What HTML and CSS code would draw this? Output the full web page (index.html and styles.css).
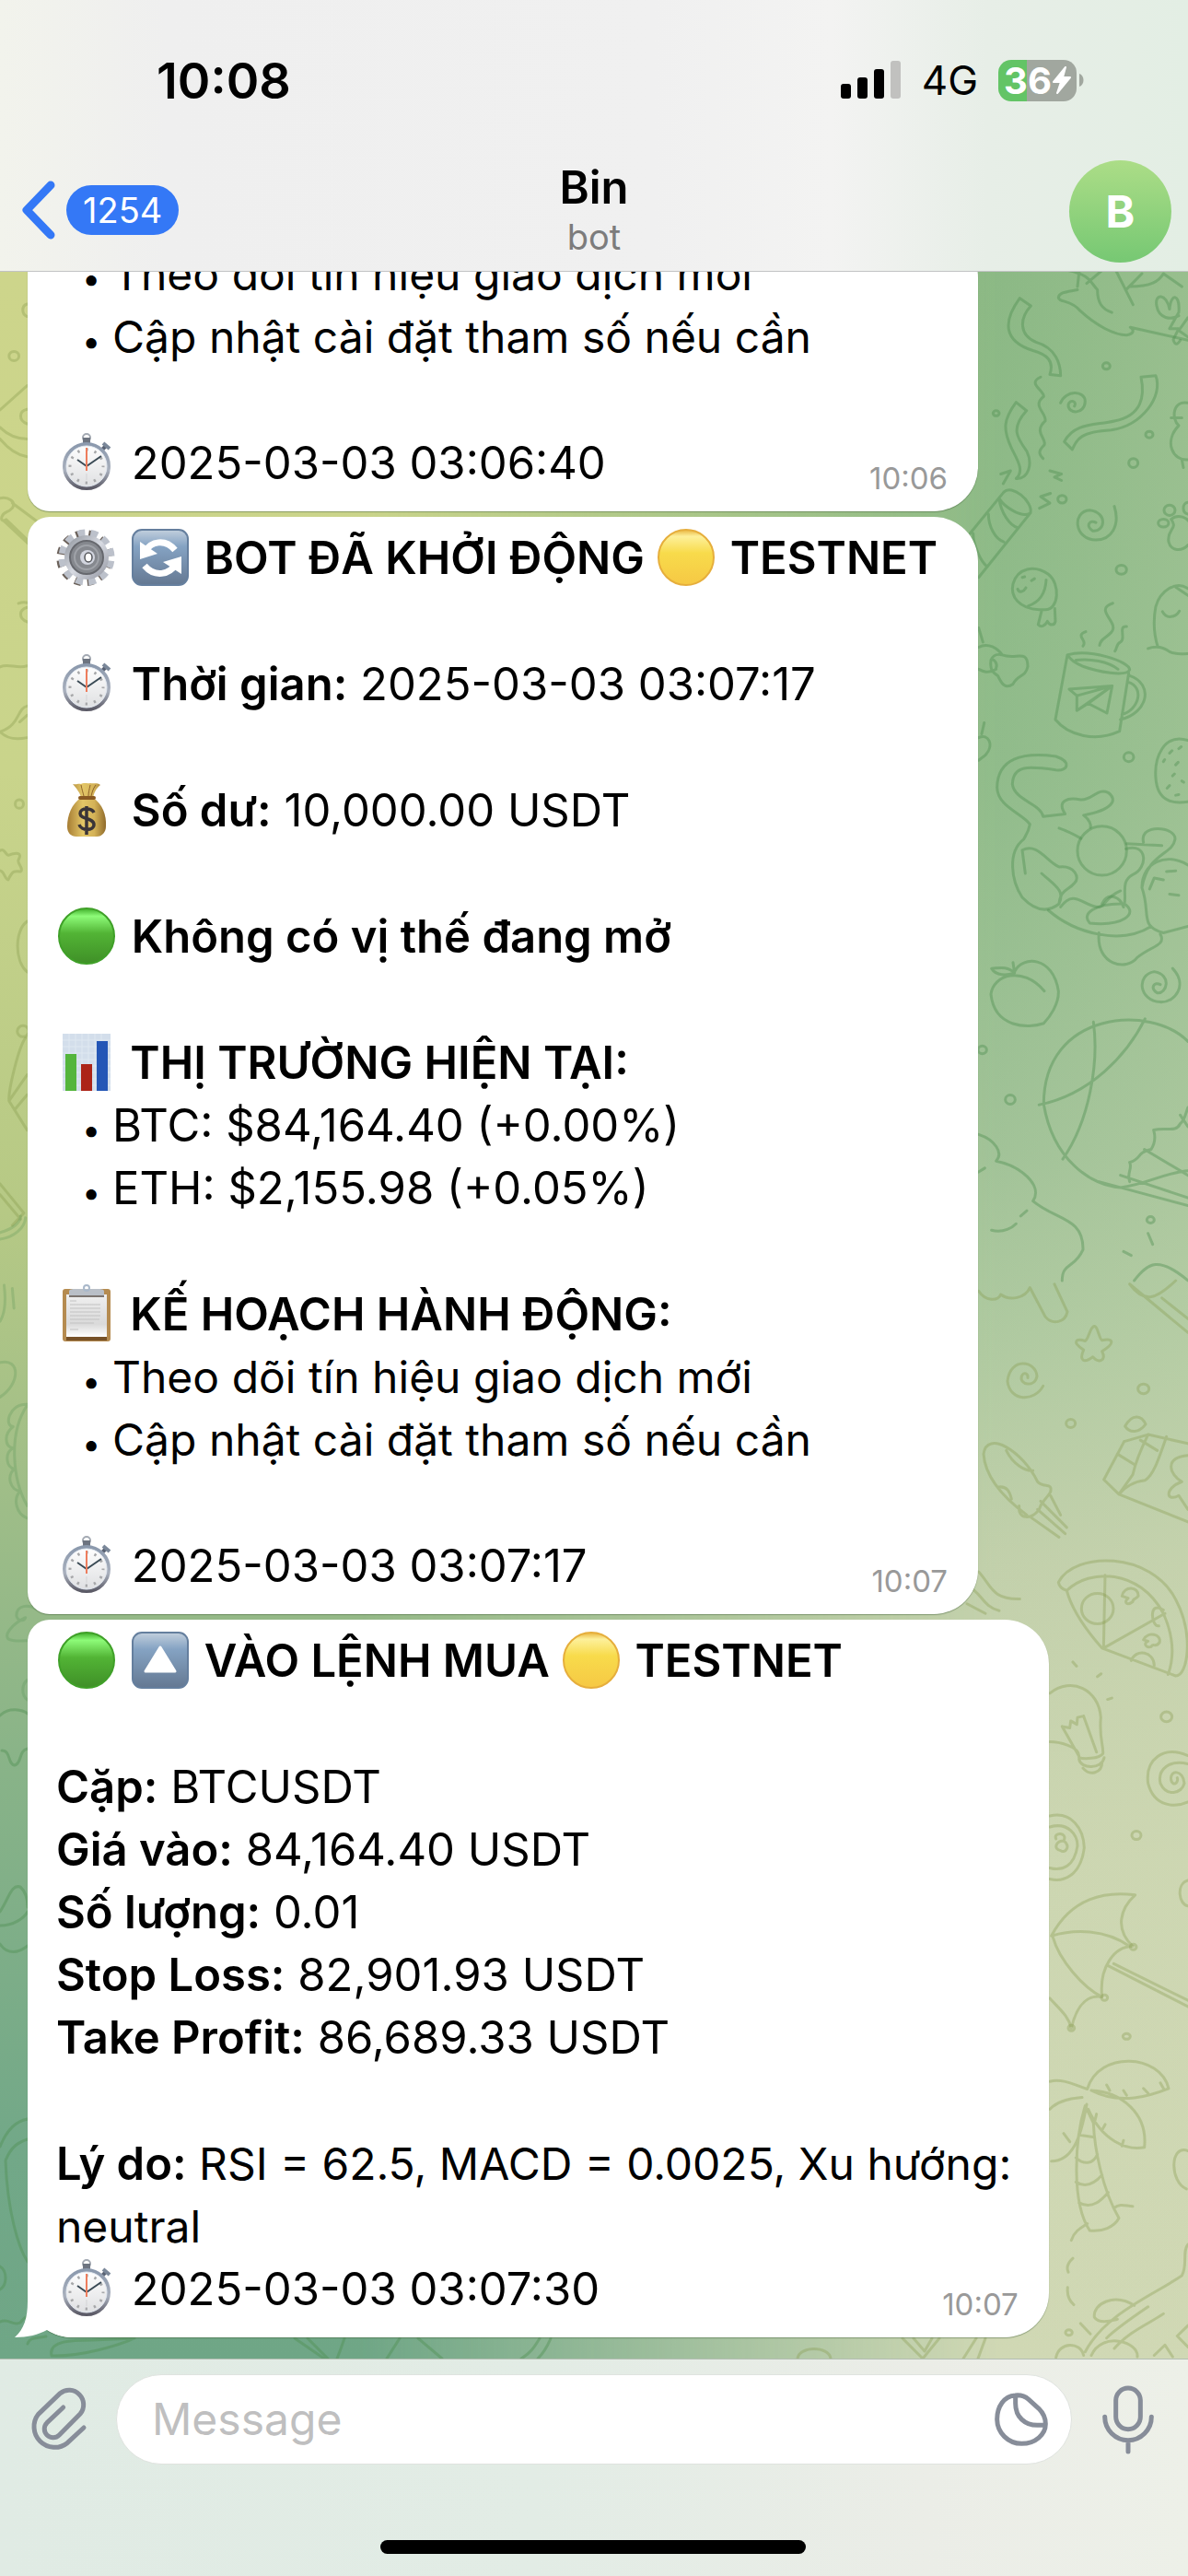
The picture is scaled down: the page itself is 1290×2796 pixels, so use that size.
FILE: index.html
```html
<!DOCTYPE html>
<html lang="vi">
<head>
<meta charset="utf-8">
<meta name="viewport" content="width=device-width, initial-scale=1">
<title>Bin</title>
<link rel="stylesheet" href="styles.css">
</head>
<body>
<svg class="sprite" aria-hidden="true">
  <defs>
    <linearGradient id="g-green" x1="0" y1="0" x2="0" y2="1"><stop offset="0" stop-color="#3fae2a"/><stop offset=".14" stop-color="#8dfb78"/><stop offset=".45" stop-color="#52b435"/><stop offset="1" stop-color="#3f8f27"/></linearGradient>
    <linearGradient id="g-yellow" x1="0" y1="0" x2="0" y2="1"><stop offset="0" stop-color="#e9b53f"/><stop offset=".12" stop-color="#fdf09a"/><stop offset=".42" stop-color="#f8db4b"/><stop offset="1" stop-color="#f6c844"/></linearGradient>
    <linearGradient id="g-key" x1="0" y1="0" x2="0" y2="1"><stop offset="0" stop-color="#c2cfdd"/><stop offset=".3" stop-color="#85a3c3"/><stop offset="1" stop-color="#647892"/></linearGradient>
    <linearGradient id="g-steel" x1="0" y1="0" x2="1" y2="1"><stop offset="0" stop-color="#8b9098"/><stop offset=".5" stop-color="#d7dae2"/><stop offset="1" stop-color="#8f939e"/></linearGradient>
    <linearGradient id="g-rim" x1="0" y1="0" x2="0" y2="1"><stop offset="0" stop-color="#8b99ad"/><stop offset=".6" stop-color="#a9b0bd"/><stop offset="1" stop-color="#5b5a66"/></linearGradient>
    <linearGradient id="g-face" x1="0" y1="0" x2="0" y2="1"><stop offset="0" stop-color="#fff"/><stop offset="1" stop-color="#dedfe1"/></linearGradient>
    <linearGradient id="g-bag" x1="0" y1="0" x2="1" y2="0"><stop offset="0" stop-color="#a67c33"/><stop offset=".4" stop-color="#e3c667"/><stop offset=".7" stop-color="#d4b257"/><stop offset="1" stop-color="#8f6a2b"/></linearGradient>
    <linearGradient id="g-paper" x1="0" y1="0" x2="0" y2="1"><stop offset="0" stop-color="#efefef"/><stop offset=".7" stop-color="#dadada"/><stop offset="1" stop-color="#fff"/></linearGradient>
  </defs>
  <symbol id="e-green" viewBox="0 0 64 64"><circle cx="33" cy="32" r="30" fill="url(#g-green)" stroke="#3fa028" stroke-width="2"/></symbol>
  <symbol id="e-yellow" viewBox="0 0 64 64"><circle cx="33" cy="32" r="30" fill="url(#g-yellow)" stroke="#e6ae3c" stroke-width="2"/></symbol>
  <symbol id="e-up" viewBox="0 0 64 64"><rect x="3" y="2" width="60" height="60" rx="10" fill="url(#g-key)" stroke="#657f9e" stroke-width="2"/><path d="M33 18 49 44H17Z" fill="#fff" stroke="#fff" stroke-width="3" stroke-linejoin="round"/></symbol>
  <symbol id="e-refresh" viewBox="0 0 64 64"><rect x="3" y="2" width="60" height="60" rx="10" fill="url(#g-key)" stroke="#657f9e" stroke-width="2"/>
    <path d="M17 25C23 15 38 11 49 24" fill="none" stroke="#fff" stroke-width="7"/><path d="M11 15V34L30 28Z" fill="#fff"/>
    <path d="M50 39C43 51 27 54 16 41" fill="none" stroke="#fff" stroke-width="7"/><path d="M56 50V31L36 37Z" fill="#fff"/></symbol>
  <symbol id="e-gear" viewBox="0 0 64 64"><g transform="rotate(8 33 32)"><circle cx="31" cy="33" r="26" fill="none" stroke="#6b615a" stroke-width="9" stroke-dasharray="6.800 6.800"/><circle cx="33" cy="32" r="26" fill="none" stroke="#bcc1cb" stroke-width="9" stroke-dasharray="7.600 6"/></g>
    <circle cx="33" cy="32" r="24" fill="url(#g-steel)"/><circle cx="33" cy="32" r="18" fill="#85888e" stroke="#66686e" stroke-width="2"/><circle cx="33" cy="32" r="13" fill="none" stroke="#9fa2a8" stroke-width="2"/><circle cx="34" cy="32" r="8" fill="#d2d5df"/><ellipse cx="35" cy="32" rx="4" ry="5" fill="#fff" stroke="#55575c" stroke-width="1.500"/></symbol>
  <symbol id="e-watch" viewBox="0 0 64 64"><circle cx="33" cy="5" r="4" fill="none" stroke="#a4aab3" stroke-width="2"/><path d="M29 5h8v6h-8z" fill="#6d7480"/><path d="m50 18 5-5" stroke="#596273" stroke-width="4"/><path d="m51 11 7 6" stroke="#7a8799" stroke-width="4"/>
    <circle cx="33" cy="36" r="24" fill="url(#g-face)" stroke="url(#g-rim)" stroke-width="4"/><circle cx="33" cy="36" r="22" fill="none" stroke="#e4eaf2"/>
    <circle cx="33" cy="36" r="18" fill="none" stroke="#a7a8aa" stroke-width="3" stroke-dasharray="2.400 7.020" stroke-dashoffset="1.200"/>
    <path d="M33 36 23 29M33 36 49 25" stroke="#3a4a55" stroke-width="2"/><path d="M33 16V41" stroke="#ee7d5d" stroke-width="2"/><path d="M33 44v7" stroke="#d3d3d5"/></symbol>
  <symbol id="e-bag" viewBox="0 0 64 64"><path d="M18 4C22 5 24 3 27 4 30 2 34 4 37 3 41 4 44 2 48 5 43 9 41 14 40 19 50 25 55 38 54 50 54 56 50 61 44 61H22C16 61 12 57 12 50 12 38 17 25 27 19 26 13 22 9 18 4Z" fill="url(#g-bag)"/><path d="M26 19h15" stroke="#8a5a22" stroke-width="4" stroke-linecap="round"/><path d="M27 5c1 5 2 8 3 12M37 5c-1 5-2 8-2 12M43 5c-3 4-4 8-5 12" stroke="#8f632a" fill="none"/><path d="M41 35C39 30 26 29 26 36 26 43 41 40 41 48 41 55 27 55 25 48M33 28V59" fill="none" stroke="#3a3438" stroke-width="3.500"/></symbol>
  <symbol id="e-chart" viewBox="0 0 64 64"><path d="M7 1h52v62H7z" fill="#d3deeb"/><path d="M7 8h52M7 15h52M7 22h52M7 29h52M7 36h52M7 43h52M7 50h52M7 57h52M14 1v62M21 1v62M28 1v62M35 1v62M42 1v62M49 1v62" stroke="#dfe8f1"/><path d="M10 23h12v40H10z" fill="#54b53c"/><path d="M27 34h12v29H27z" fill="#ac2418"/><path d="M44 9h12v54H44z" fill="#2456b6"/></symbol>
  <symbol id="e-board" viewBox="0 0 64 64"><rect x="7" y="5" width="52" height="57" rx="3" fill="#b58b50"/><path d="M11 56h44v5H11z" fill="#765128"/><path d="M11 11h44v46H11z" fill="url(#g-paper)"/><path d="M15 18h7M15 22h33M15 26h33M15 30h33M15 34h33M15 38h32M15 42h26M15 49h9" stroke="#c2c2c2"/><path d="M14 8c0-3 3-3 8-3h22c5 0 8 0 8 3v6H14z" fill="#b9bfc7"/><path d="M14 12h38v2H14z" fill="#7b7470"/><circle cx="33" cy="4" r="3" fill="none" stroke="#a9b8ca" stroke-width="2"/></symbol>
</svg>

<div class="app">
  <header class="top">
    <div class="status">
      <time class="clock">10:08</time>
      <div class="indicators">
        <svg width="66" height="42" viewBox="0 0 66 42" role="img" aria-label="Signal"><rect y="25" width="11" height="16" rx="3"/><rect x="18" y="18" width="11" height="23" rx="3"/><rect x="36" y="9" width="11" height="32" rx="3"/><rect x="54" width="11" height="41" rx="3" fill="#c1c1bf"/></svg>
        <span class="network">4G</span>
        <span class="battery"><span class="level">36<svg width="20" height="30" viewBox="0 0 20 30" aria-hidden="true"><path d="M14 1 1 17H9L5 29 19 12H11Z" fill="#fff" stroke="#fff" stroke-width="2" stroke-linejoin="round"/></svg></span><svg width="6" height="14" viewBox="0 0 6 14" aria-hidden="true"><path d="M0 0C6 2 6 12 0 14Z" fill="#a1a79f"/></svg></span>
      </div>
    </div>
    <nav class="nav">
      <a class="back" href="#chats" aria-label="Back, 1254 unread">
        <svg width="42" height="66" viewBox="0 0 42 66" aria-hidden="true"><path d="M37 6 11 33 37 60" fill="none" stroke="#3478f6" stroke-width="9" stroke-linecap="round" stroke-linejoin="round"/></svg>
        <span class="count">1254</span>
      </a>
      <div class="peer"><h1>Bin</h1><p>bot</p></div>
      <a class="avatar" href="#profile">B</a>
    </nav>
  </header>

  <main class="chat">
    <svg class="doodles" viewBox="0 295 1290 2265" preserveAspectRatio="xMaxYMin slice" aria-hidden="true">
      <g class="ink" transform="translate(1050 290) scale(.3333 .7015)">
        <path d="M330 5C400 12 400 22 425 35 425 55 440 65 472 70M360 30 366 5M390 25 440 5M485 5 541 58M520 34 570 10M530 30C600 30 625 22 640 10L700 30M360 35C330 38 300 38 298 47 300 55 340 50 370 68 420 90 480 105 520 105 545 103 545 97 532 93L720 113"/>
        <path d="M660 65C650 40 610 40 618 60 625 80 665 82 690 75M660 65C665 38 695 42 690 70M690 70 660 95H690L672 112Q680 125 695 113M720 78 690 98 720 108"/>
        <path d="M172 48 208 60C170 80 170 105 225 116 290 125 305 150 305 168L270 166C285 145 260 135 215 129 120 115 115 85 172 48ZM160 209 194 222C140 250 165 265 195 285 215 305 200 328 160 327 190 315 160 295 145 280 115 250 120 235 160 209Z"/>
        <path d="M240 170C195 180 250 190 250 200 210 215 260 225 255 238 215 255 260 265 252 275 230 285 235 290 248 296"/>
        <path d="M305 210C320 190 385 190 385 208 383 228 330 228 330 213 335 203 360 208 350 215M480 370C500 400 470 422 420 422 350 422 340 378 400 376 460 380 450 410 410 408 385 400 400 390 420 395"/>
        <path d="M567 170 615 168C640 200 570 245 470 252 370 255 360 265 343 282L317 270C350 240 420 245 480 238 570 230 580 200 567 170Z"/>
        <path d="M110 320 142 315 118 335M270 315 308 320 285 325 308 330M272 350 240 355 270 365 236 373"/>
        <path d="M10 412 120 348C145 335 215 362 207 380 180 390 120 370 105 358M207 380 38 480M70 382C70 400 90 420 120 425M105 358C110 380 140 400 165 403M20 412C20 430 45 455 65 463"/>
        <path d="M235 530C170 528 140 510 150 490 165 465 220 460 265 475 305 490 300 530 255 530ZM258 484C255 510 225 520 200 524M165 498C170 505 185 502 192 496M180 480 188 479M210 485 220 482M243 532 232 553C240 558 255 555 262 548 270 555 285 555 288 548L286 528"/>
        <path d="M38 558 52 580M38 588C70 580 100 590 115 600 160 608 198 590 198 618 190 635 165 630 150 645 120 655 110 640 100 632 80 627 75 620 78 608 85 600 100 598 115 600M78 608C90 605 100 615 95 620M95 622C70 630 50 625 38 622"/>
        <path d="M327 600C400 590 530 610 530 623 520 635 420 625 380 618 350 612 340 608 327 600L288 700C330 725 420 735 497 718L527 628M355 608C400 605 460 610 492 622M530 632C610 645 590 690 500 700M525 642C580 650 560 685 505 692M333 653 473 648 456 690 395 675 358 686V663ZM358 663 473 648 395 675M473 648 358 686"/>
        <path d="M387 564C350 570 395 578 378 586M475 520C410 530 500 550 470 565 450 575 435 575 432 585M520 556C490 555 520 575 500 580 485 583 490 590 482 594"/>
        <path d="M720 497C680 485 630 500 615 525 605 550 610 570 622 588M590 590C620 585 640 588 660 595 680 600 700 598 720 598M637 533C650 545 680 542 692 532M680 495 720 508M720 732C640 720 610 760 615 790 620 830 680 830 720 827M660 752 668 748M690 745 698 742M680 770 688 766M640 765 644 762M670 787 676 784M700 795 706 797M652 806 660 802M680 817 690 816"/>
        <path d="M38 728C70 720 90 740 60 755L38 763M48 722 56 705M720 210C670 205 665 235 690 245 640 270 670 300 720 298M665 233H700M700 298 705 310"/>
        <path d="M665 390C690 380 720 390 720 392M665 390C690 405 650 405 657 425 665 440 700 440 720 430"/><ellipse cx="660" cy="376" rx="18" ry="8"/><ellipse cx="640" cy="396" rx="17" ry="6"/><path d="M720 382C700 380 700 365 720 364"/>
        <path d="M205 862C180 845 100 835 98 805 100 760 180 750 290 757 340 765 330 780 290 778 200 772 150 770 148 800 155 825 240 830 248 850L320 846C290 825 330 820 370 824 410 825 425 805 460 813 495 825 470 840 380 848 400 855 405 863 402 867M205 862C200 875 190 880 185 885 130 905 145 950 180 975 220 995 260 1000 300 985 320 965 290 958 243 938M180 902C230 890 260 920 300 928 350 925 370 945 350 953 330 965 305 962 300 985M180 902 190 938M305 990C350 960 380 990 430 990 450 990 450 975 500 965M300 868C330 873 350 878 372 884"/>
        <ellipse cx="440" cy="903" rx="80" ry="38"/><path d="M520 892 635 895M575 890C560 860 680 865 678 885 670 910 590 905 570 960M518 900C590 890 590 930 540 940 500 950 520 970 513 985 560 1000 510 1020 400 1015 370 1000 420 985 500 985M440 985C460 965 500 975 510 990M430 1030C420 1080 520 1090 555 1068 600 1050 650 1050 630 1032M265 995C350 1030 500 1050 600 1020M720 925C650 905 570 920 570 960 600 1000 560 1020 640 1030L720 1020M595 962 610 945 640 948M650 935 680 934M660 970 690 972"/>
        <path d="M155 1090C180 1065 280 1065 298 1120 300 1140 270 1160 250 1170 200 1178 90 1178 78 1125 85 1095 180 1080 252 1120M155 1092C130 1080 100 1085 80 1085 95 1097 130 1096 155 1092L150 1076M670 1085C720 1110 680 1138 630 1137 560 1135 550 1095 610 1090 670 1095 650 1125 620 1123 595 1115 610 1105 630 1110"/>
        <path d="M720 1198C600 1140 250 1150 250 1295 280 1380 400 1420 500 1424 580 1420 650 1400 720 1398M412 1168C430 1230 400 1320 312 1380M235 1296C400 1280 520 1220 580 1163M430 1415 720 1452M530 1415C520 1400 540 1395 530 1385 570 1380 550 1370 600 1365 620 1350 610 1340 608 1335 650 1330 680 1340 695 1325 710 1320 715 1305 720 1300M578 1365 720 1405M500 1405 720 1440M695 1312 720 1330"/>
        <path d="M38 1342C90 1350 120 1370 95 1383 170 1390 250 1420 215 1445 290 1475 380 1470 378 1520 350 1550 310 1540 310 1568M80 1490C120 1495 150 1485 160 1480M175 1468 195 1460M38 1400 58 1394M590 1495 605 1512M510 1523 535 1529M545 1568C590 1540 625 1530 720 1568"/>
        <ellipse cx="454" cy="153" rx="12" ry="5"/><ellipse cx="95" cy="226" rx="10" ry="4"/><ellipse cx="594" cy="259" rx="12" ry="5"/><ellipse cx="542" cy="303" rx="15" ry="7"/><ellipse cx="310" cy="359" rx="14" ry="6"/><ellipse cx="503" cy="468" rx="17" ry="7"/><ellipse cx="527" cy="758" rx="16" ry="7"/><ellipse cx="141" cy="1288" rx="16" ry="7"/><ellipse cx="50" cy="1211" rx="14" ry="6"/><ellipse cx="598" cy="1474" rx="12" ry="5"/>
      </g>
      <g class="ink olive" transform="translate(1050 1390) scale(.3333 .7526)">
        <path d="M38 15C60 30 100 30 110 20 140 30 190 25 205 10L255 52C280 65 320 60 327 45L285 5M530 5C580 35 620 25 680 0M530 5 720 75M635 25 720 55"/>
        <path d="M410 67C425 60 430 85 440 86 470 83 490 88 440 102 455 115 430 120 410 110 380 120 365 115 380 100 340 88 355 83 385 87 395 85 400 70 410 67Z"/>
        <path d="M248 152C220 175 140 175 132 145 140 110 225 115 228 138 220 155 170 150 178 138 185 130 200 135 198 140"/>
        <path d="M195 338C140 320 60 290 54 250 65 215 180 245 230 290 250 300 280 290 272 305 250 320 240 320 235 330 210 345 165 345 170 325M128 245C150 265 190 275 215 274M100 298C130 295 140 305 145 315M240 318 325 356M230 330 320 365M210 342 300 370M272 310 305 338"/>
        <path d="M512 232 590 222 720 235M512 232 446 287 495 308 720 348M590 222C570 240 550 260 540 280L495 308M650 225C630 250 610 280 580 288 540 290 510 300 495 308M490 250 545 265M565 230 620 245M515 210C540 190 570 195 582 207 560 220 530 220 515 210ZM720 252C640 255 660 280 700 290 640 300 650 320 690 310L720 330"/>
        <path d="M298 435C350 390 600 390 680 460 740 510 720 570 680 570L440 530C400 510 345 480 325 447 310 445 300 440 298 435ZM325 447C400 415 560 415 640 480 680 520 670 550 655 568M450 425 445 530 645 480M535 548C550 530 610 535 610 555M640 475C590 460 600 500 625 498"/><ellipse cx="425" cy="473" rx="52" ry="22"/><path d="M505 455C510 440 560 440 558 455 550 460 540 458 540 463 520 470 510 463 525 458ZM575 518C590 505 635 510 627 522 615 530 605 522 600 528 580 530 575 522 590 520Z"/>
        <path d="M38 420C80 440 80 460 172 459M0 440C50 450 50 470 105 476M0 466 60 480"/>
        <path d="M270 595C340 570 430 590 436 630 430 660 445 670 443 682 430 690 380 690 365 688 370 670 290 665 270 665M365 690C370 705 440 705 447 688M378 703C400 715 440 710 440 695M310 643 365 686M380 628 422 680M310 643 335 645 338 635 358 640 360 630 380 628M345 550 357 556M425 571 437 567M458 604 472 602M720 685C640 670 580 690 590 725 610 760 680 760 720 752M720 697C660 690 620 705 630 725 650 745 700 740 708 725 705 705 660 705 665 720 670 730 690 725 685 717"/>
        <path d="M270 772C340 765 380 790 382 818 370 860 310 868 270 863M270 788C330 780 360 800 360 815 350 845 310 852 270 847M290 805C280 795 330 795 315 808 340 815 320 827 305 822 280 820 290 808 315 808M720 865C680 870 690 900 720 902"/>
        <path d="M275 945C340 890 450 880 548 886 500 905 480 935 540 960 480 960 430 990 440 1033 400 1030 360 1040 340 1078 330 1060 300 1050 270 1035M275 945C350 935 450 935 530 960M280 947C300 980 380 1020 440 1033M460 988 720 1047M478 985 720 1038"/><ellipse cx="542" cy="961" rx="10" ry="4"/><ellipse cx="448" cy="1034" rx="10" ry="4"/><ellipse cx="340" cy="1078" rx="10" ry="4"/>
        <path d="M270 1155C310 1150 350 1160 392 1166 430 1110 630 1115 657 1165 600 1175 500 1190 405 1168M405 1168C500 1170 590 1200 578 1250 520 1255 440 1240 395 1195M375 1178C320 1180 290 1185 270 1195M390 1188C370 1240 340 1270 275 1270M385 1190C350 1240 340 1330 400 1370 440 1372 480 1365 495 1352 440 1310 415 1250 412 1215ZM365 1232 410 1235M355 1265C380 1275 410 1275 425 1260M355 1300C390 1310 420 1300 440 1290M365 1330C410 1340 440 1325 460 1315M340 1384C350 1370 375 1365 392 1360M480 1337C500 1330 520 1335 540 1335M455 1160 465 1168M510 1168 520 1175M575 1165 590 1172M630 1157 640 1165M415 1215 422 1202M440 1225 450 1217M505 1248 510 1240M315 1230 335 1242"/>
        <path d="M345 1410C325 1418 325 1425 330 1430M328 1452C325 1465 335 1472 348 1477M370 1504 402 1519M720 1390C700 1400 720 1420 700 1435 600 1465 450 1490 385 1545M545 1478C480 1460 410 1475 415 1495 430 1505 470 1500 490 1498M590 1480C540 1495 490 1510 455 1525M640 1490C590 1505 530 1515 480 1540M290 1553C300 1530 370 1530 380 1550M405 1550C440 1515 560 1530 555 1552M685 1522 720 1507M685 1522 720 1538M610 1550 645 1535 670 1552M720 1255C660 1245 660 1300 715 1310"/>
        <ellipse cx="575" cy="156" rx="18" ry="7"/><ellipse cx="338" cy="206" rx="15" ry="6"/><ellipse cx="650" cy="629" rx="18" ry="7"/><ellipse cx="552" cy="800" rx="15" ry="6"/><ellipse cx="520" cy="1090" rx="12" ry="4"/><ellipse cx="332" cy="1517" rx="11" ry="4"/>
      </g>
      <g class="ink olive" transform="translate(0 280) scale(.4464 .3571)">
        <path d="M66 140C52 145 52 170 66 178M0 462 66 388M66 460C45 465 45 495 66 504M0 515C20 540 45 550 66 550M0 550C20 580 45 600 66 604M0 730C20 725 40 740 30 760 20 775 10 770 5 785 0 800 10 800 15 795L90 885M30 745 100 810M10 800 70 870M45 1050C55 1045 62 1046 66 1048M66 1062C45 1070 45 1095 66 1106M0 1243C20 1230 40 1250 66 1240M66 1362C40 1370 50 1420 0 1440 15 1460 40 1465 66 1458M48 1410 66 1390"/>
        <ellipse cx="34" cy="298" rx="12" ry="14"/>
      </g>
      <g class="ink olive" transform="translate(0 830) scale(.4464 .3333)">
        <path d="M0 280C10 270 15 295 20 295 40 285 55 285 45 310 40 320 60 340 50 348 35 345 30 345 20 375 12 375 10 345 0 345M66 510C35 540 35 640 66 675M62 890C45 920 20 1060 22 1095L66 1190M22 1095 66 1010M38 1120 66 1075M0 1365 58 1460 30 1500M0 1400 50 1480"/>
        <ellipse cx="47" cy="128" rx="10" ry="14"/><ellipse cx="56" cy="868" rx="14" ry="18"/>
      </g>
      <g class="ink faint" transform="translate(0 1320) scale(.4464 .3571)">
        <path d="M0 50C30 40 50 20 50 0M0 70C35 65 60 35 62 5M10 210C15 260 10 300 0 320M30 220 34 280M0 445C50 430 50 510 0 550M66 572C20 570 10 640 32 640 10 660 10 700 32 705 10 720 15 765 35 768 15 790 25 835 50 835 30 860 40 905 66 918M66 575C20 660 30 800 66 880M90 1195C70 1180 40 1180 40 1215 45 1235 60 1230 62 1220 30 1240 10 1270 20 1285 35 1295 60 1290 66 1290M66 1410C52 1425 52 1455 66 1470"/>
      </g>
      <g class="ink">
        <path d="M0 1862C10 1852 25 1856 30 1860M2 1900C12 1900 8 1915 16 1916 24 1914 20 1900 30 1898M0 2075C10 2060 12 2045 22 2048 30 2055 30 2065 30 2070M0 2090C15 2090 26 2082 30 2075M0 2110C8 2122 20 2120 30 2112M0 2330C8 2310 18 2302 30 2300M6 2345C12 2330 20 2325 30 2322M6 2345C8 2400 20 2440 30 2455M0 2460C8 2465 8 2480 0 2485M0 2520C10 2516 14 2525 22 2521 26 2516 28 2514 32 2514M30 2544C32 2536 42 2538 50 2536M56 2557C52 2540 80 2540 100 2540L146 2538C130 2545 90 2558 56 2557M320 2538 352 2560M334 2538 356 2560M374 2538C370 2550 368 2555 366 2560M420 2560 434 2538M454 2538 480 2560M586 2538C580 2548 576 2554 566 2560M598 2538C594 2548 588 2556 584 2560"/>
      </g>
      <g class="ink olive"><path d="M866 2560C868 2546 900 2546 902 2560M980 2538 1002 2560 1020 2538M992 2538 1004 2552 1012 2538M1046 2560 1060 2538M1062 2560 1070 2538"/></g>
    </svg>

    <article class="bubble">
      <div class="lines">
        <ul><li>Theo dõi tín hiệu giao dịch mới</li><li>Cập nhật cài đặt tham số nếu cần</li></ul>
        <footer class="meta"><p class="fact"><svg class="emoji" role="img" aria-label="⏱"><use href="#e-watch"/></svg> 2025-03-03 03:06:40</p><time>10:06</time></footer>
      </div>
    </article>

    <article class="bubble">
      <div class="lines">
        <h2><svg class="emoji" role="img" aria-label="⚙"><use href="#e-gear"/></svg> <svg class="emoji" role="img" aria-label="🔄"><use href="#e-refresh"/></svg> BOT ĐÃ KHỞI ĐỘNG <svg class="emoji" role="img" aria-label="🟡"><use href="#e-yellow"/></svg> TESTNET</h2>
        <p class="fact"><svg class="emoji" role="img" aria-label="⏱"><use href="#e-watch"/></svg> <b>Thời gian:</b> 2025-03-03 03:07:17</p>
        <p class="fact"><svg class="emoji" role="img" aria-label="💰"><use href="#e-bag"/></svg> <b>Số dư:</b> 10,000.00 USDT</p>
        <p class="fact"><svg class="emoji" role="img" aria-label="🟢"><use href="#e-green"/></svg> <b>Không có vị thế đang mở</b></p>
        <section>
          <h2><svg class="emoji" role="img" aria-label="📊"><use href="#e-chart"/></svg> THỊ TRƯỜNG HIỆN TẠI:</h2>
          <ul><li class="fact">BTC: $84,164.40 (+0.00%)</li><li class="fact">ETH: $2,155.98 (+0.05%)</li></ul>
        </section>
        <section>
          <h2><svg class="emoji" role="img" aria-label="📋"><use href="#e-board"/></svg> KẾ HOẠCH HÀNH ĐỘNG:</h2>
          <ul><li>Theo dõi tín hiệu giao dịch mới</li><li>Cập nhật cài đặt tham số nếu cần</li></ul>
        </section>
        <footer class="meta"><p class="fact"><svg class="emoji" role="img" aria-label="⏱"><use href="#e-watch"/></svg> 2025-03-03 03:07:17</p><time>10:07</time></footer>
      </div>
    </article>

    <article class="bubble last">
      <svg class="tail" viewBox="0 0 64 56" aria-hidden="true"><path d="M14 0V16C14 34 10 46 0 55 14 55 26 52 35 47 43 52 52 55 64 55V0Z" fill="#fff"/></svg>
      <div class="lines">
        <h2><svg class="emoji" role="img" aria-label="🟢"><use href="#e-green"/></svg> <svg class="emoji" role="img" aria-label="🔼"><use href="#e-up"/></svg> VÀO LỆNH MUA <svg class="emoji" role="img" aria-label="🟡"><use href="#e-yellow"/></svg> TESTNET</h2>
        <section>
          <p class="fact"><b>Cặp:</b> BTCUSDT</p>
          <p class="fact"><b>Giá vào:</b> 84,164.40 USDT</p>
          <p class="fact"><b>Số lượng:</b> 0.01</p>
          <p class="fact"><b>Stop Loss:</b> 82,901.93 USDT</p>
          <p class="fact"><b>Take Profit:</b> 86,689.33 USDT</p>
        </section>
        <section>
          <p><b>Lý do:</b> RSI = 62.5, MACD = 0.0025, Xu hướng: neutral</p>
          <footer class="meta"><p class="fact"><svg class="emoji" role="img" aria-label="⏱"><use href="#e-watch"/></svg> 2025-03-03 03:07:30</p><time>10:07</time></footer>
        </section>
      </div>
    </article>
  </main>

  <form class="composer">
    <div class="entry">
      <button type="button" aria-label="Attach"><svg width="68" height="76" viewBox="90 384 204 228"><path d="M273 525 219 575A67 67 0 0 1 125 481L196 413A47 47 0 0 1 262 479L193 549A28 28 0 0 1 153 509L206 459"/></svg></button>
      <div class="field">
        <input type="text" placeholder="Message" aria-label="Message">
        <button type="button" aria-label="Stickers"><svg width="60" height="60" viewBox="58 107 180 180"><path d="M128 119C92 121 69 155 69 197A80 80 0 0 0 149 276C195 276 227 245 227 212 227 190 218 175 205 162L172 132C158 120 145 117 128 119ZM129 122V145C129 190 160 216 200 216H225"/></svg></button>
      </div>
      <button type="button" aria-label="Record voice"><svg width="66" height="80" viewBox="399 78 198 240"><rect x="458" y="96" width="80" height="134" rx="40"/><path d="M422 190A76 76 0 0 0 574 190M498 267V303"/></svg></button>
    </div>
    <div class="home"></div>
  </form>
</div>
</body>
</html>
```
FILE: styles.css
```css
* { box-sizing: border-box; }
body, h1, h2, p, ul { margin: 0; padding: 0; }
body { font-family: Inter, "Noto Sans", sans-serif; color: #000; }
button { padding: 0; border: 0; background: none; display: flex; }
a { color: inherit; text-decoration: none; }

.sprite { position: absolute; width: 0; height: 0; }

.app { display: grid; grid-template-rows: auto 1fr auto; height: 100vh; }

/* Header */
.top {
  padding-bottom: 9px;
  border-bottom: 1px solid #c2c3c4;
  background: linear-gradient(to right, #f2f3ec, #efefef 14%, #f0f0f0 55%, #f3f3f2 70%, #e7eee7 83%, #e3eee4);
}
.status { display: flex; justify-content: space-between; align-items: center; height: 174px; padding: 0 112px 0 170px; }
.clock { font-size: 54px; font-weight: 600; }
.indicators { display: flex; align-items: center; gap: 22px; }
.network { font-size: 44px; }
.battery { display: flex; align-items: center; gap: 3px; }
.level {
  display: flex; align-items: center; justify-content: center; gap: 1px;
  width: 85px; height: 45px; border-radius: 14px;
  background: linear-gradient(to right, #63c466 36%, #a1a79f 36%);
  color: #fff; font-size: 40px; font-weight: 700;
}
.nav { display: grid; grid-template-columns: 1fr auto 1fr; align-items: start; padding: 0 18px; }
.back { display: flex; align-items: center; gap: 12px; height: 108px; }
.count {
  padding: 0 18px; border-radius: 27px; background: #3478f6;
  color: #fff; font-size: 38px; line-height: 54px;
}
.peer { text-align: center; }
.peer h1 { font-size: 49px; line-height: 60px; font-weight: 600; }
.peer p { font-size: 38px; line-height: 46px; color: #7c7c7c; }
.avatar {
  justify-self: end; width: 111px; height: 111px; border-radius: 50%;
  background: linear-gradient(#acdd87, #76c873);
  color: #fff; font-size: 48px; font-weight: 700; line-height: 111px; text-align: center;
}

/* Conversation */
.chat {
  position: relative; min-height: 0; overflow: hidden;
  display: flex; flex-direction: column; justify-content: flex-end; gap: 6px;
  padding: 0 0 23px 30px;
  background: linear-gradient(#cdd58b, #c9d48b 24%, #b6c985 45%, #a0be88 58%, #88b388 72%, #72a888 90%, #6fa686);
}
.chat::before {
  content: ""; position: absolute; inset: 0;
  background:
    linear-gradient(to left, rgba(209, 217, 181, .2), rgba(209, 217, 181, 0) 18%),
    linear-gradient(#8ab884, #8fbb8a 24%, #a0c297 42%, #b0caa1 52%, #c2d0ab 62%, #ccd6b1 76%, #d0d8b4);
  mask-image: linear-gradient(to right, transparent 30%, #000 84%);
}
.doodles { position: absolute; inset: 0; width: 100%; height: 100%; }
.ink { fill: none; stroke: #4f8f50; stroke-opacity: .42; stroke-width: 3px; stroke-linecap: round; stroke-linejoin: round; }
.ink * { vector-effect: non-scaling-stroke; }
.olive { stroke: #84994a; stroke-opacity: .34; }
.faint { stroke-opacity: .25; }

.bubble {
  position: relative; flex: none; width: 82%; max-width: 1032px;
  padding: 11px 33px 18px 31px; border-radius: 24px 48px 48px 24px;
  background: #fff; box-shadow: 0 1px 1px rgba(60, 90, 50, .45);
  font-size: 48px; line-height: 68px;
}
.last { width: 88%; max-width: 1110px; border-bottom-left-radius: 48px; }
.tail { position: absolute; left: -14px; bottom: -1px; width: 64px; height: 56px; }
.lines { position: relative; display: flex; flex-direction: column; gap: 69px; }
.bubble h2 { height: 68px; font-size: 49px; line-height: 68px; font-weight: 600; white-space: nowrap; }
.bubble b { font-size: 49px; font-weight: 600; line-height: 48px; }
.bubble ul { list-style: none; }
.bubble li { padding-left: 28px; }
.bubble li::before { content: "•"; display: inline-block; width: 33px; font-size: 36px; line-height: 48px; }
.emoji { width: 64px; height: 64px; margin-right: 4px; vertical-align: -14px; }
.bubble .fact { height: 68px; font-size: 49px; }
.meta { display: flex; justify-content: space-between; align-items: flex-end; }
.meta time { font-size: 33px; line-height: 36px; color: #999; }

/* Composer */
.composer {
  padding: 16px 32px 24px 30px; border-top: 1px solid #b3bdb2;
  background: linear-gradient(to right, #e0ebe4, #e2ece5 45%, #ebede7 78%, #edf0e8);
}
.entry { display: flex; align-items: center; gap: 28px; }
.entry svg { fill: none; stroke: #878d99; stroke-width: 15px; stroke-linecap: round; stroke-linejoin: round; }
.field {
  flex: 1; display: flex; align-items: center; height: 98px; padding: 0 24px 0 38px;
  border: 1px solid #dfe3df; border-radius: 49px; background: #fff;
}
.field input { flex: 1; min-width: 0; padding: 0; border: 0; outline: 0; background: none; font: 48px/68px Inter, sans-serif; }
.field input::placeholder { color: #bfbfc0; opacity: 1; }
.home { width: 462px; height: 15px; margin: 82px auto 0; border-radius: 8px; background: #000; }
```
